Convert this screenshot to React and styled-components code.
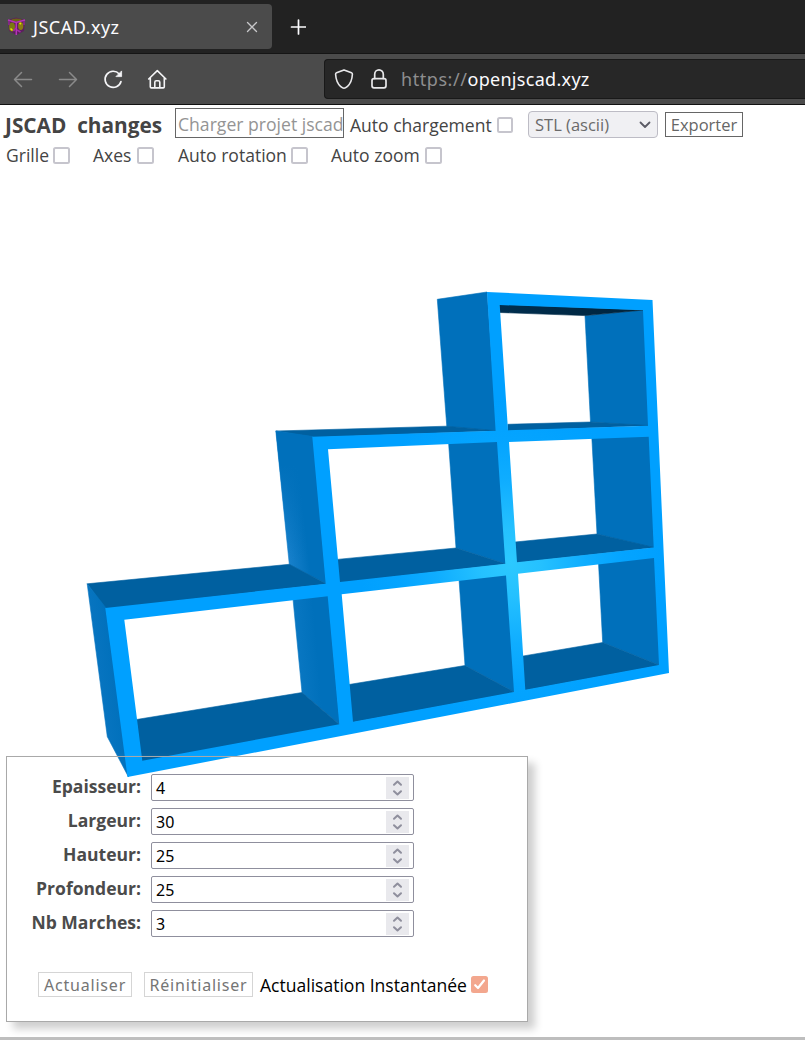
import React from "react";
import styled, { createGlobalStyle } from "styled-components";

const Global = createGlobalStyle`
  * { box-sizing: border-box; }
  body { margin: 0; background: #fff; font-family: "Open Sans", "Noto Sans", sans-serif; }
`;

const Browser = styled.div`
  width: 805px;
  height: 1040px;
  overflow: hidden;
  display: flex;
  flex-direction: column;
`;

const TabBar = styled.div`
  height: 54px;
  flex: none;
  display: flex;
  align-items: flex-start;
  padding-top: 4px;
  background: #222;
  border-bottom: 1px solid #151515;
  color: #fbfbfe;
`;

const Tab = styled.div`
  width: 272px;
  height: 45px;
  display: flex;
  align-items: center;
  padding: 0 14px 0 7px;
  background: #4b4b4b;
  border-radius: 0 4px 4px 0;
`;

const TabTitle = styled.span`
  flex: 1;
  margin-left: 7px;
  font: 18px/24px "Noto Sans", sans-serif;
  letter-spacing: 0.5px;
`;

const NewTab = styled.div`
  margin: 15px 0 0 18px;
  display: flex;
`;

const NavBar = styled.div`
  height: 51px;
  flex: none;
  display: flex;
  align-items: center;
  background: #4b4b4b;
  border-bottom: 1px solid #111;
  padding-left: 12px;
`;

const NavIcons = styled.div`
  width: 312px;
  display: flex;
  gap: 23px;
`;

const AddressBar = styled.div`
  flex: 1;
  height: 40px;
  display: flex;
  align-items: center;
  gap: 15px;
  background: #272727;
  border: 1px solid #191919;
  border-right: 0;
  border-radius: 4px 0 0 4px;
  padding-left: 8px;
`;

const Address = styled.span`
  margin-left: -2px;
  font: 18px/24px "Noto Sans", sans-serif;
  letter-spacing: 0.3px;
  color: #fbfbfe;
  white-space: nowrap;
`;

const Scheme = styled.span`
  color: #8e8e8f;
  letter-spacing: 0.55px;
`;

const Page = styled.main`
  flex: 1;
  position: relative;
  display: flex;
  flex-direction: column;
  background: #fff;
  border-bottom: 3px solid #bebebe;
  color: #444;
`;

const MainRow = styled.div`
  display: flex;
  height: 38px;
  padding: 3px 0 0 5px;
  align-items: flex-start;
`;

const Title = styled.h1`
  margin: 3px 0 0;
  width: 170px;
  font-size: 20.8px;
  line-height: 28px;
  font-weight: 700;
  white-space: pre;
`;

const ProjectInput = styled.input`
  width: 169px;
  height: 30px;
  padding: 1px 0 0 2px;
  border: 1px solid #666;
  outline: 0;
  background: #fff;
  font: 17.6px/24px "Open Sans", sans-serif;
  &::placeholder { color: #949494; opacity: 1; }
`;

const OptionsRow = styled.div`
  display: flex;
  height: 25px;
  padding: 0 0 0 6px;
`;

const CheckLabel = styled.label`
  display: flex;
  align-items: center;
  justify-content: space-between;
  flex: none;
  width: ${(p) => p.$width}px;
  height: 24px;
  margin: ${(p) => p.$margin || "0"};
  font-size: 17.55px;
  line-height: 24px;
  white-space: nowrap;
  color: ${(p) => p.$color || "inherit"};
`;

const Box = styled.span`
  width: ${(p) => p.$size || 17}px;
  height: ${(p) => p.$size || 17}px;
  flex: none;
  display: flex;
  border: ${(p) => (p.$checked ? "0" : "2px solid #c6c5cd")};
  border-radius: 2.5px;
  background: ${(p) => (p.$checked ? "#f3a78e" : "#fff")};
`;

const FormatSelect = styled.div`
  width: 130px;
  height: 27px;
  margin: 3px 7px 0 15px;
  padding: 0 6px;
  display: flex;
  align-items: center;
  justify-content: space-between;
  border: 1px solid #bdbcc5;
  border-radius: 4px;
  background: #f0f0f3;
  color: #6a6a6a;
  font-size: 16.5px;
  line-height: 24px;
`;

const Button = styled.button`
  flex: none;
  width: ${(p) => p.$width}px;
  height: 25px;
  padding: 0;
  border: 1px solid ${(p) => (p.$muted ? "#d5d5d5" : "#666")};
  background: #fff;
  color: ${(p) => (p.$muted ? "#757575" : "#666")};
  font: ${(p) => (p.$muted ? '16px/22px "Noto Sans"' : '16.5px/22px "Open Sans"')}, sans-serif;
  letter-spacing: ${(p) => (p.$muted ? "0.8px" : "0")};
  margin: ${(p) => p.$margin || "0"};
  white-space: nowrap;
`;

const Scene = styled.svg`
  display: block;
  width: 805px;
  height: 869px;
  flex: none;
`;

const Panel = styled.form`
  position: absolute;
  left: 6px;
  top: 651px;
  width: 522px;
  height: 266px;
  padding: 17px 0 0 20px;
  border: 1px solid #a9a9a9;
  box-shadow: 7px 7px 8px #cfcfcf;
`;

const Field = styled.div`
  display: flex;
  height: 34px;
`;

const FieldName = styled.label`
  width: 114px;
  margin-right: 10px;
  text-align: right;
  font-size: 17.55px;
  line-height: 25px;
  font-weight: 700;
  color: #4b4b4b;
  white-space: nowrap;
`;

const NumberBox = styled.div`
  width: 263px;
  height: 27px;
  padding: 1px 4px 0 4px;
  display: flex;
  align-items: center;
  justify-content: space-between;
  border: 1px solid #8f8f9d;
  border-radius: 2px;
  background: #fff;
  color: #000;
  font: 16px/25px "Noto Sans", sans-serif;
`;

const Spinner = styled.span`
  width: 23px;
  height: 22px;
  background: #e9e9ed;
  display: flex;
`;

const Actions = styled.div`
  display: flex;
  align-items: center;
  margin: 28px 0 0 11px;
`;

const stroke = { fill: "none", strokeLinecap: "round", strokeLinejoin: "round" };

const Favicon = () => (
  <svg width="19" height="19" viewBox="0 0 19 19">
    <path d="M1 3 9 .5 18 3 17 14 9.500 18 2 14Z" fill="#5c1f5e" />
    <ellipse cx="9.500" cy="3" rx="5" ry="1.500" fill="#6d6414" />
    <ellipse cx="5" cy="10" rx="3" ry="4.500" fill="#7c7812" />
    <ellipse cx="13.700" cy="9" rx="2.600" ry="4" fill="#8b7a14" />
    <path d="M3.500 11.500l2 2M12.500 6l1.500 1" stroke="#e6e600" strokeWidth="1.600" />
    <path d="M1 3 9 5.500 18 3M9.300 5.500V18" stroke="#b535b8" strokeWidth="1.500" fill="none" />
    <path d="M2 4v4M17 4v4" stroke="#8d2b90" strokeWidth="1.500" />
    <path d="M9 11l-2.500 3M10 13l3.500 2" stroke="#a42ba8" strokeWidth="1.600" />
  </svg>
);

const Arrow = ({ flip }) => (
  <svg width="22" height="22" viewBox="0 0 22 22" {...stroke} stroke="#8a8a8a" strokeWidth="1.500">
    <path d={flip ? "M2.500 11.500H19.500M12.500 4.500l7 7-7 7" : "M19.500 11.500H2.500M9.500 4.500l-7 7 7 7"} />
  </svg>
);

const Reload = () => (
  <svg width="22" height="22" viewBox="0 0 22 22" {...stroke} stroke="#f5f5f7" strokeWidth="1.700">
    <path d="M19 13.500A8.100 8.100 0 1 1 17.300 6" />
    <path d="M19.600 3.300v5.300h-5.300z" fill="#f5f5f7" strokeWidth=".8" />
  </svg>
);

const Home = () => (
  <svg width="22" height="22" viewBox="0 0 22 22" {...stroke} stroke="#f5f5f7" strokeWidth="1.600">
    <path d="M1.700 11 10.300 2.700 18.900 11M3.300 10v8.800q0 1.100 1.100 1.100h11.800q1.100 0 1.100-1.100V10" />
    <path d="M7.800 19.500v-5.200q0-1.500 1.500-1.500h2q1.500 0 1.500 1.500v5.200" />
  </svg>
);

const Shield = () => (
  <svg width="22" height="22" viewBox="0 0 22 22" {...stroke} stroke="#e8e8ea" strokeWidth="1.600">
    <path d="M11 1.900 18.500 4.800Q19.500 5.200 19.400 6.300 18.900 14.500 14.500 18.300 12.300 20.200 11 20.200T7.500 18.300Q3.100 14.500 2.600 6.300 2.500 5.200 3.500 4.800Z" />
  </svg>
);

const Lock = () => (
  <svg width="18" height="22" viewBox="0 0 18 22" {...stroke} stroke="#e8e8ea" strokeWidth="1.700">
    <rect x="2" y="10.700" width="14" height="9.100" rx="2" />
    <path d="M4.700 10.500V6.200a4.300 4.300 0 0 1 8.600 0v4.300" />
  </svg>
);

const Chevrons = () => (
  <svg width="23" height="22" viewBox="0 0 23 22" {...stroke} stroke="#8f8f9d" strokeWidth="2">
    <path d="M8 7.800l3.500-3.300L15 7.800M8 14.200l3.500 3.300 3.500-3.300" />
  </svg>
);

const FACE = "#00a0ff";
const SIDE = "#0070bb";
const FLOOR = "#0060a0";

const surfaces = [
  [SIDE, "437.3,299.3 487,292 497,431 446.8,426.5"],
  [FLOOR, "275.8,431 446.6,426.2 497,430.7 312,437.5"],
  ["url(#sheenUpper)", "275.8,431 313,436.600 326.500,584 289.300,564.500"],
  [FLOOR, "87.2,583.8 289.3,564.3 326.5,584 105,609"],
  ["url(#sheenLeft)", "87.2,583.8 106,608 128.500,777 107.300,736.700"],
  [SIDE, "585,315.800 644,310 649,426 590.500,422"],
  ["url(#ceiling)", "499,304.500 644,310 585,315.600 499.500,312.500"],
  [FLOOR, "507.800,424.300 590.500,422 649,425.500 508,431"],
  [SIDE, "591.800,437 649.500,436 654.500,548 597,534"],
  [FLOOR, "515,542 597,534 654.500,547.500 516,563"],
  [SIDE, "598.500,563 655,557 660,665.500 602.700,642.500"],
  [FLOOR, "522,656.200 602.700,642.500 660,665.500 524.500,690.500"],
  [SIDE, "448.600,443 498,441 506,564 456,548"],
  [FLOOR, "337,559.400 456,548 506,564 339,583"],
  [SIDE, "459,579 507,574.500 515,692.500 465,665.500"],
  [FLOOR, "349,684.500 465,665.500 515,692.500 352,722.500"],
  ["url(#sheenLower)", "293,599 328.500,595.500 340,725 302,692.500"],
  [FLOOR, "136.500,719.500 302,692.500 340,725 141,762"],
];

const facePath = [
  "M487 292 652.500 300 669 673 127.500 777 105.300 608 325.700 583.700 312.300 436.700 495.600 430.700Z",
  "M499.700 305 643 310.300 648 425.700 508 430.300Z",
  "M509 442 648.700 436.700 653.700 547.400 517 562.300Z",
  "M518 573.700 654 558 659 665 525.300 689.700Z",
  "M328 449.300 497 442 505.300 563.700 340 582Z",
  "M341.700 594.300 506 575.400 514 692 353 721.700Z",
  "M124.300 619.700 327.700 596.300 339.300 724.300 142.300 760.700Z",
].join("");

const ShelfModel = () => (
  <Scene viewBox="0 168 805 869">
    <defs>
      <radialGradient id="glow" gradientUnits="userSpaceOnUse" cx="0" cy="0" r="1" gradientTransform="translate(510 562) rotate(-18) scale(150 165)">
        <stop offset="0" stopColor="#2cc9ff" />
        <stop offset=".2" stopColor="#25c1ff" />
        <stop offset=".5" stopColor="#0fadff" />
        <stop offset=".75" stopColor="#04a4ff" />
        <stop offset="1" stopColor={FACE} />
      </radialGradient>
      <linearGradient id="ceiling"><stop stopColor="#002e4f" /><stop offset="1" stopColor="#00243c" /></linearGradient>
      <linearGradient id="sheenUpper" gradientUnits="userSpaceOnUse" x1="279" y1="530" x2="305" y2="527">
        <stop stopColor="#1f86d1" /><stop offset="1" stopColor={SIDE} />
      </linearGradient>
      <linearGradient id="sheenLower" gradientUnits="userSpaceOnUse" x1="293" y1="640" x2="316" y2="638">
        <stop stopColor="#0a78c3" /><stop offset="1" stopColor={SIDE} />
      </linearGradient>
      <linearGradient id="sheenLeft" gradientUnits="userSpaceOnUse" x1="92" y1="650" x2="115" y2="647">
        <stop stopColor="#0875c1" /><stop offset="1" stopColor={SIDE} />
      </linearGradient>
      <linearGradient id="fade" x1="0" y1="465" x2="0" y2="560" gradientUnits="userSpaceOnUse">
        <stop stopColor={SIDE} /><stop offset="1" stopColor={SIDE} stopOpacity="0" />
      </linearGradient>
    </defs>
    {surfaces.map(([fill, points]) => (
      <polygon key={points} fill={fill} stroke={fill} strokeWidth=".6" strokeLinejoin="round" points={points} />
    ))}
    <polygon fill="url(#fade)" points="275.8,431 313,436.600 326.500,584 289.300,564.500" />
    <path d={facePath} fill="url(#glow)" fillRule="evenodd" />
  </Scene>
);

const fields = [
  ["Epaisseur:", 4],
  ["Largeur:", 30],
  ["Hauteur:", 25],
  ["Profondeur:", 25],
  ["Nb Marches:", 3],
];

export default function App() {
  return (
    <Browser>
      <Global />
      <TabBar>
        <Tab>
          <Favicon />
          <TabTitle>JSCAD.xyz</TabTitle>
          <svg width="12" height="12" viewBox="0 0 12 12" {...stroke} stroke="#c8c8ca" strokeWidth="1.300"><path d="M1.500 1.500l9 9m0-9-9 9" /></svg>
        </Tab>
        <NewTab>
          <svg width="16" height="16" viewBox="0 0 16 16" {...stroke} stroke="#fbfbfe" strokeWidth="1.700"><path d="M8.500 1v14M1.500 8h14" /></svg>
        </NewTab>
      </TabBar>
      <NavBar>
        <NavIcons><Arrow /><Arrow flip /><Reload /><Home /></NavIcons>
        <AddressBar>
          <Shield /><Lock />
          <Address><Scheme>https://</Scheme>openjscad.xyz</Address>
        </AddressBar>
      </NavBar>
      <Page>
        <MainRow>
          <Title>{"JSCAD  changes"}</Title>
          <ProjectInput placeholder="Charger projet jscad" />
          <CheckLabel $width={163} $margin="5px 0 0 6px">Auto chargement <Box $size={16} /></CheckLabel>
          <FormatSelect>
            STL (ascii)
            <svg width="12" height="8" viewBox="0 0 12 8" {...stroke} stroke="#5b5b66" strokeWidth="1.800"><path d="M1.500 1.500 6 6l4.500-4.500" /></svg>
          </FormatSelect>
          <Button type="button" $width={78} $margin="4px 0 0">Exporter</Button>
        </MainRow>
        <OptionsRow>
          <CheckLabel $width={64}>Grille <Box /></CheckLabel>
          <CheckLabel $width={61} $margin="0 0 0 23px">Axes <Box /></CheckLabel>
          <CheckLabel $width={130} $margin="0 0 0 24px">Auto rotation <Box /></CheckLabel>
          <CheckLabel $width={111} $margin="0 0 0 23px">Auto zoom <Box /></CheckLabel>
        </OptionsRow>
        <ShelfModel />
        <Panel>
          {fields.map(([name, value]) => (
            <Field key={name}>
              <FieldName>{name}</FieldName>
              <NumberBox>{value}<Spinner><Chevrons /></Spinner></NumberBox>
            </Field>
          ))}
          <Actions>
            <Button type="button" $muted $width={94}>Actualiser</Button>
            <Button type="button" $muted $width={109} $margin="0 7px 0 12px">Réinitialiser</Button>
            <CheckLabel $width={228} $color="#000">
              Actualisation Instantanée
              <Box $checked>
                <svg width="17" height="17" viewBox="0 0 17 17" {...stroke} stroke="#fff" strokeWidth="2.200"><path d="M4.200 9.200 7 12l6-7.500" /></svg>
              </Box>
            </CheckLabel>
          </Actions>
        </Panel>
      </Page>
    </Browser>
  );
}
